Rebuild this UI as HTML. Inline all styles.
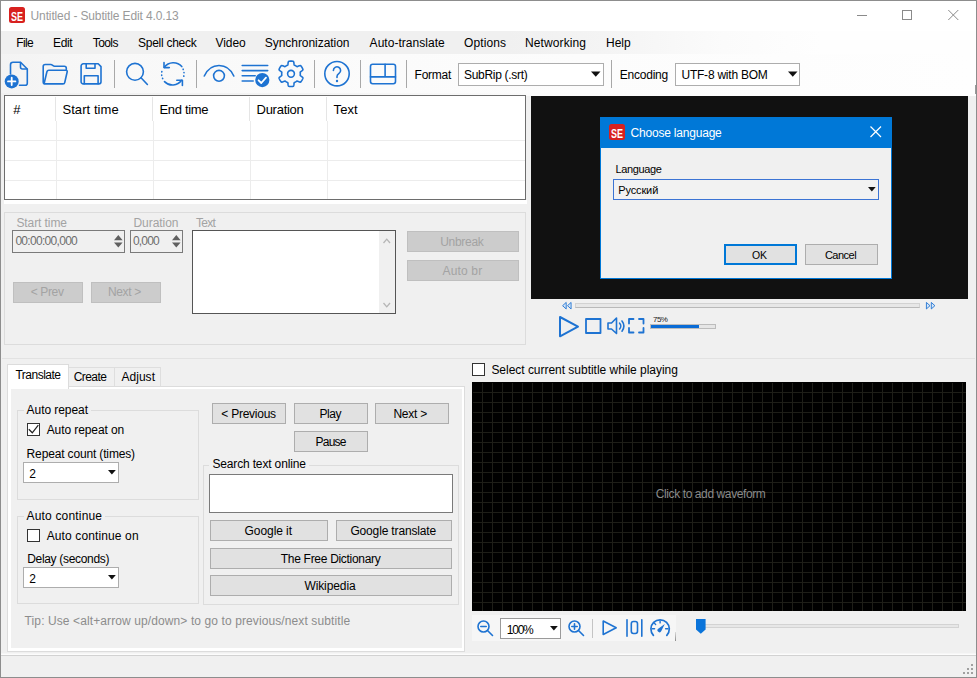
<!DOCTYPE html>
<html lang="en"><head><meta charset="utf-8"><title>Untitled - Subtitle Edit 4.0.13</title>
<style>
html,body{margin:0;padding:0;}
body{width:977px;height:678px;overflow:hidden;background:#f0f0f0;position:relative;font-family:"Liberation Sans",sans-serif;}
.r{position:absolute;box-sizing:border-box;display:block;}
.t{position:absolute;white-space:pre;line-height:normal;font-family:"Liberation Sans",sans-serif;}
svg{overflow:visible;}
</style></head><body>
<div class="r" style="left:0px;top:0px;width:977px;height:31px;background:#ffffff;"></div>
<div class="r" style="left:9px;top:7px;width:16px;height:16px;background:#d8211f;border-radius:2.5px;"></div>
<span class="t nm" style="left:11px;top:8.9px;font-size:13px;font-weight:bold;color:#fff;transform:scaleX(.69);transform-origin:0 0;">SE</span>
<span class="t" style="left:30.6px;top:9.15px;font-size:12px;letter-spacing:-0.136px;color:#9a9a9a;">Untitled - Subtitle Edit 4.0.13</span>
<svg class="r" style="left:857px;top:0px;" width="120" height="31" viewBox="0 0 120 31"><g fill="none" stroke="#8a8a8a" stroke-width="1"><path d="M0 15.5h10"/><rect x="45.500" y="10.500" width="9" height="9"/><path d="M91.300 10l10 10M101.300 10l-10 10"/></g></svg>
<div class="r" style="left:0px;top:31px;width:977px;height:23px;background:linear-gradient(to right,#f0f0f0 0%,#f0f0f0 52%,#f4f4f4 62%,#fbfbfb 74%,#fefefe 84%,#fefefe 100%);"></div>
<span class="t" style="left:16.3px;top:35.95px;font-size:12px;letter-spacing:-0.615px;color:#000;">File</span>
<span class="t" style="left:53.0px;top:35.95px;font-size:12px;letter-spacing:-0.329px;color:#000;">Edit</span>
<span class="t" style="left:92.7px;top:35.95px;font-size:12px;letter-spacing:-0.554px;color:#000;">Tools</span>
<span class="t" style="left:138.0px;top:35.95px;font-size:12px;letter-spacing:-0.268px;color:#000;">Spell check</span>
<span class="t" style="left:215.6px;top:35.95px;font-size:12px;letter-spacing:-0.096px;color:#000;">Video</span>
<span class="t" style="left:264.8px;top:35.95px;font-size:12px;letter-spacing:-0.049px;color:#000;">Synchronization</span>
<span class="t" style="left:369.6px;top:35.95px;font-size:12px;letter-spacing:0.037px;color:#000;">Auto-translate</span>
<span class="t" style="left:464.0px;top:35.95px;font-size:12px;letter-spacing:0.107px;color:#000;">Options</span>
<span class="t" style="left:525.0px;top:35.95px;font-size:12px;letter-spacing:0.108px;color:#000;">Networking</span>
<span class="t" style="left:606.0px;top:35.95px;font-size:12px;letter-spacing:-0.029px;color:#000;">Help</span>
<div class="r" style="left:0px;top:54px;width:977px;height:39px;background:linear-gradient(to right,#f3f3f3 0%,#f8f8f8 12%,#fbfbfb 40%,#fefefe 100%);"></div>
<div class="r" style="left:114px;top:60px;width:1px;height:28px;background:#a8a8a8;"></div>
<div class="r" style="left:196px;top:60px;width:1px;height:28px;background:#a8a8a8;"></div>
<div class="r" style="left:314px;top:60px;width:1px;height:28px;background:#a8a8a8;"></div>
<div class="r" style="left:360px;top:60px;width:1px;height:28px;background:#a8a8a8;"></div>
<div class="r" style="left:406px;top:60px;width:1px;height:28px;background:#a8a8a8;"></div>
<div class="r" style="left:611px;top:60px;width:1px;height:28px;background:#a8a8a8;"></div>
<span class="t" style="left:414.6px;top:67.75px;font-size:12px;letter-spacing:-0.243px;color:#000;">Format</span>
<div class="r" style="left:458px;top:63px;width:146px;height:23px;background:#fff;border:1px solid #adadad;"></div>
<span class="t" style="left:464.0px;top:67.75px;font-size:12px;letter-spacing:-0.305px;color:#000;">SubRip (.srt)</span>
<svg class="r" style="left:591px;top:71px;" width="10" height="6" viewBox="0 0 10 6"><path d="M0 0.500h9.500L4.750 5.700z" fill="#111"/></svg>
<span class="t" style="left:619.8px;top:67.75px;font-size:12px;letter-spacing:-0.235px;color:#000;">Encoding</span>
<div class="r" style="left:675px;top:63px;width:125px;height:23px;background:#fff;border:1px solid #adadad;"></div>
<span class="t" style="left:681.5px;top:67.75px;font-size:12px;letter-spacing:-0.234px;color:#000;">UTF-8 with BOM</span>
<svg class="r" style="left:788px;top:71px;" width="10" height="6" viewBox="0 0 10 6"><path d="M0 0.500h9.500L4.750 5.700z" fill="#111"/></svg>
<div class="r" style="left:0px;top:93px;width:977px;height:3px;background:linear-gradient(to right,#f0f0f0 0%,#f3f3f3 30%,#fbfbfb 55%,#fefefe 100%);"></div>
<div class="r" style="left:4px;top:95px;width:522px;height:105px;background:#fff;border:1px solid #6d6d6d;"></div>
<div class="r" style="left:4px;top:200px;width:523px;height:4px;background:#fff;"></div>
<div class="r" style="left:56px;top:121px;width:1px;height:78px;background:#ececec;"></div>
<div class="r" style="left:55px;top:97px;width:1px;height:24px;background:#e5e5e5;"></div>
<div class="r" style="left:153px;top:121px;width:1px;height:78px;background:#ececec;"></div>
<div class="r" style="left:152px;top:97px;width:1px;height:24px;background:#e5e5e5;"></div>
<div class="r" style="left:250px;top:121px;width:1px;height:78px;background:#ececec;"></div>
<div class="r" style="left:249px;top:97px;width:1px;height:24px;background:#e5e5e5;"></div>
<div class="r" style="left:327px;top:121px;width:1px;height:78px;background:#ececec;"></div>
<div class="r" style="left:326px;top:97px;width:1px;height:24px;background:#e5e5e5;"></div>
<div class="r" style="left:5px;top:140px;width:520px;height:1px;background:#ececec;"></div>
<div class="r" style="left:5px;top:160px;width:520px;height:1px;background:#ececec;"></div>
<div class="r" style="left:5px;top:180px;width:520px;height:1px;background:#ececec;"></div>
<span class="t" style="left:13.3px;top:101.83px;font-size:13px;letter-spacing:-0.034px;color:#000;">#</span>
<span class="t" style="left:62.4px;top:101.83px;font-size:13px;letter-spacing:0.075px;color:#000;">Start time</span>
<span class="t" style="left:159.5px;top:101.83px;font-size:13px;letter-spacing:-0.316px;color:#000;">End time</span>
<span class="t" style="left:256.5px;top:101.83px;font-size:13px;letter-spacing:-0.263px;color:#000;">Duration</span>
<span class="t" style="left:333.6px;top:101.83px;font-size:13px;letter-spacing:0.085px;color:#000;">Text</span>
<div class="r" style="left:4px;top:212px;width:522px;height:133px;border:1px solid #dcdcdc;"></div>
<span class="t" style="left:16.4px;top:215.55px;font-size:12px;letter-spacing:-0.084px;color:#a3a3a3;">Start time</span>
<span class="t" style="left:133.5px;top:215.55px;font-size:12px;letter-spacing:-0.051px;color:#a3a3a3;">Duration</span>
<span class="t" style="left:196.0px;top:215.55px;font-size:12px;letter-spacing:-0.739px;color:#a3a3a3;">Text</span>
<div class="r" style="left:12px;top:230px;width:113px;height:23px;background:#f0f0f0;border:1px solid #7a7a7a;"></div>
<span class="t" style="left:15.4px;top:233.95px;font-size:12px;letter-spacing:-0.698px;color:#6d6d6d;">00:00:00,000</span>
<div class="r" style="left:130px;top:230px;width:53px;height:23px;background:#f0f0f0;border:1px solid #7a7a7a;"></div>
<span class="t" style="left:133.0px;top:233.95px;font-size:12px;letter-spacing:-0.833px;color:#6d6d6d;">0,000</span>
<svg class="r" style="left:113.6px;top:234.8px;" width="9" height="13" viewBox="0 0 9 13"><path d="M0 5.200L4.300 0l4.300 5.200zM0 7.600h8.600L4.300 12.500z" fill="#606060"/></svg>
<svg class="r" style="left:171.5px;top:234.8px;" width="9" height="13" viewBox="0 0 9 13"><path d="M0 5.200L4.300 0l4.300 5.200zM0 7.600h8.600L4.300 12.500z" fill="#606060"/></svg>
<div class="r" style="left:13px;top:282px;width:70px;height:21px;background:#cccccc;border:1px solid #bfbfbf;"></div>
<span class="t" style="left:30.7px;top:284.95px;font-size:12px;letter-spacing:-0.363px;color:#a3a3a3;">&lt; Prev</span>
<div class="r" style="left:91px;top:282px;width:70px;height:21px;background:#cccccc;border:1px solid #bfbfbf;"></div>
<span class="t" style="left:107.9px;top:284.95px;font-size:12px;letter-spacing:-0.343px;color:#a3a3a3;">Next &gt;</span>
<div class="r" style="left:192px;top:230px;width:204px;height:84px;background:#fff;border:1px solid #555;"></div>
<div class="r" style="left:379px;top:231px;width:16px;height:82px;background:#f0f0f0;"></div>
<svg class="r" style="left:383px;top:238px;" width="8" height="6" viewBox="0 0 8 6"><path d="M0.500 5L3.750 1.200 7 5" fill="none" stroke="#b5b5b5" stroke-width="1.300"/></svg>
<svg class="r" style="left:383px;top:301.5px;" width="8" height="6" viewBox="0 0 8 6"><path d="M0.500 1L3.750 4.800 7 1" fill="none" stroke="#b5b5b5" stroke-width="1.300"/></svg>
<div class="r" style="left:407px;top:231px;width:112px;height:21px;background:#cccccc;border:1px solid #bfbfbf;"></div>
<span class="t" style="left:440.2px;top:235.05px;font-size:12px;letter-spacing:-0.293px;color:#a3a3a3;">Unbreak</span>
<div class="r" style="left:407px;top:260px;width:112px;height:21px;background:#cccccc;border:1px solid #bfbfbf;"></div>
<span class="t" style="left:442.5px;top:264.05px;font-size:12px;letter-spacing:0.166px;color:#a3a3a3;">Auto br</span>
<div class="r" style="left:531px;top:96px;width:437px;height:203px;background:#111111;"></div>
<div class="r" style="left:600px;top:117px;width:292px;height:162px;background:#f0f0f0;border:1px solid #0078d7;"></div>
<div class="r" style="left:600px;top:117px;width:292px;height:31px;background:#0078d7;"></div>
<div class="r" style="left:609px;top:124px;width:16px;height:16px;background:#d8211f;border-radius:2.5px;"></div>
<span class="t nm" style="left:611px;top:125.6px;font-size:13px;font-weight:bold;color:#fff;transform:scaleX(.69);transform-origin:0 0;">SE</span>
<span class="t" style="left:630.6px;top:125.95px;font-size:12px;letter-spacing:-0.206px;color:#fff;">Choose language</span>
<svg class="r" style="left:870px;top:126px;" width="12" height="12" viewBox="0 0 12 12"><path d="M0.500 0.500l10.500 10.500M11 0.500L0.500 11" stroke="#fff" stroke-width="1.200" fill="none"/></svg>
<span class="t" style="left:615.4px;top:162.87px;font-size:11px;letter-spacing:-0.336px;color:#000;">Language</span>
<div class="r" style="left:613px;top:179px;width:266px;height:21px;background:#f2f2f2;border:1px solid #3c74d4;"></div>
<span class="t" style="left:618.2px;top:183.97px;font-size:11px;letter-spacing:-0.121px;color:#000;">Русский</span>
<svg class="r" style="left:867.7px;top:187.4px;" width="8" height="5" viewBox="0 0 8 5"><path d="M0 0h7.700L3.850 4.400z" fill="#111"/></svg>
<div class="r" style="left:724px;top:244px;width:73px;height:21px;background:#e1e1e1;border:2px solid #0078d7;"></div>
<span class="t" style="left:751.9px;top:249.33px;font-size:10.5px;letter-spacing:0.000px;color:#000;">OK</span>
<div class="r" style="left:805px;top:244px;width:73px;height:21px;background:#e1e1e1;border:1px solid #adadad;"></div>
<span class="t" style="left:824.9px;top:248.87px;font-size:11px;letter-spacing:-0.510px;color:#000;">Cancel</span>
<svg class="r" style="left:562px;top:302px;" width="10" height="8" viewBox="0 0 10 8"><g fill="none" stroke="#1e73d2" stroke-linecap="round" stroke-linejoin="round" stroke-width="0.900"><path d="M3.900 0.700L0.600 3.700 3.900 6.700zM8.800 0.700L5.500 3.700 8.800 6.700z" fill="#d6e6f8"/></g></svg>
<svg class="r" style="left:926px;top:302px;" width="10" height="8" viewBox="0 0 10 8"><g fill="none" stroke="#1e73d2" stroke-linecap="round" stroke-linejoin="round" stroke-width="0.900"><path d="M0.700 0.700L4 3.700 0.700 6.700zM5.600 0.700L8.900 3.700 5.600 6.700z" fill="#d6e6f8"/></g></svg>
<div class="r" style="left:575px;top:303px;width:345px;height:5px;background:#e7e7e7;border:1px solid #d2d2d2;border-bottom-color:#b9b9b9;"></div>
<svg class="r" style="left:558px;top:315px;" width="22" height="23" viewBox="0 0 22 23"><g fill="none" stroke="#1e73d2" stroke-linecap="round" stroke-linejoin="round" stroke-width="2"><path d="M2 2v19.300L20 11.600z"/></g></svg>
<svg class="r" style="left:585px;top:318px;" width="17" height="16" viewBox="0 0 17 16"><g fill="none" stroke="#1e73d2" stroke-linecap="round" stroke-linejoin="round" stroke-width="1.800"><rect x="1" y="1" width="14.500" height="14"/></g></svg>
<svg class="r" style="left:607px;top:317px;" width="18" height="18" viewBox="0 0 18 18"><g fill="none" stroke="#1e73d2" stroke-linecap="round" stroke-linejoin="round" stroke-width="1.600"><path d="M1 6v6h3.500l5 4.500v-15.500l-5 5z"/><path d="M12.600 6.200a4.200 4.200 0 0 1 0 5.800M15 4a8.500 8.500 0 0 1 0 10.200"/></g></svg>
<svg class="r" style="left:628px;top:318px;" width="17" height="16" viewBox="0 0 17 16"><g fill="none" stroke="#1e73d2" stroke-linecap="round" stroke-linejoin="round" stroke-width="1.800"><path d="M1 5.500V1h4.500M11 1h4.500v4.500M15.500 10v4.500H11M5.500 14.500H1V10"/></g></svg>
<span class="t" style="left:653.1px;top:314.53px;font-size:8px;letter-spacing:-0.608px;color:#222;">75%</span>
<div class="r" style="left:650px;top:324px;width:66px;height:5px;background:#e6e6e6;border:1px solid #bcbcbc;"></div>
<div class="r" style="left:651px;top:325px;width:48px;height:3px;background:#0a6cd6;"></div>
<div class="r" style="left:2px;top:358px;width:973px;height:1px;background:#e2e2e2;"></div>
<div class="r" style="left:7px;top:386px;width:458px;height:266px;border:1px solid #dcdcdc;"></div>
<div class="r" style="left:8px;top:387px;width:456px;height:264px;background:#f0f0f0;border:2px solid #fff;border-width:2px 2px 3px 3px;"></div>
<div class="r" style="left:7px;top:364px;width:62px;height:25px;background:#fff;border:1px solid #dcdcdc;border-bottom:none;"></div>
<div class="r" style="left:69px;top:367px;width:46px;height:19px;background:#f0f0f0;border:1px solid #dedede;border-bottom:none;border-left:none;"></div>
<div class="r" style="left:115px;top:367px;width:46px;height:19px;background:#f0f0f0;border:1px solid #dedede;border-bottom:none;border-left:none;"></div>
<span class="t" style="left:15.5px;top:367.75px;font-size:12px;letter-spacing:-0.510px;color:#000;">Translate</span>
<span class="t" style="left:73.7px;top:369.95px;font-size:12px;letter-spacing:-0.566px;color:#000;">Create</span>
<span class="t" style="left:121.4px;top:369.95px;font-size:12px;letter-spacing:0.048px;color:#000;">Adjust</span>
<div class="r" style="left:17px;top:410px;width:182px;height:90px;border:1px solid #dcdcdc;"></div>
<div class="r" style="left:24px;top:403px;width:67px;height:14px;background:#f0f0f0;"></div>
<span class="t" style="left:26.6px;top:402.75px;font-size:12px;letter-spacing:-0.065px;color:#000;">Auto repeat</span>
<div class="r" style="left:27px;top:423px;width:13px;height:13px;background:#fff;border:1px solid #333;"></div>
<svg class="r" style="left:27px;top:423px;" width="13" height="13" viewBox="0 0 13 13"><path d="M1.800 6.200L5.300 9.800 11.300 2.200" fill="none" stroke="#222" stroke-width="1.250"/></svg>
<span class="t" style="left:46.7px;top:422.75px;font-size:12px;letter-spacing:-0.087px;color:#000;">Auto repeat on</span>
<span class="t" style="left:26.6px;top:447.05px;font-size:12px;letter-spacing:-0.152px;color:#000;">Repeat count (times)</span>
<div class="r" style="left:23px;top:462px;width:96px;height:21px;background:#fff;border:1px solid #adadad;"></div>
<span class="t" style="left:29.3px;top:466.55px;font-size:12px;letter-spacing:0.000px;color:#000;">2</span>
<svg class="r" style="left:107.9px;top:470px;" width="8" height="5" viewBox="0 0 8 5"><path d="M0 0h7.800L3.900 4.600z" fill="#111"/></svg>
<div class="r" style="left:17px;top:516px;width:182px;height:88px;border:1px solid #dcdcdc;"></div>
<div class="r" style="left:24px;top:509px;width:81px;height:14px;background:#f0f0f0;"></div>
<span class="t" style="left:26.6px;top:508.55px;font-size:12px;letter-spacing:0.167px;color:#000;">Auto continue</span>
<div class="r" style="left:27px;top:529px;width:13px;height:13px;background:#fff;border:1px solid #333;"></div>
<span class="t" style="left:46.7px;top:528.65px;font-size:12px;letter-spacing:0.121px;color:#000;">Auto continue on</span>
<span class="t" style="left:27.2px;top:552.05px;font-size:12px;letter-spacing:-0.315px;color:#000;">Delay (seconds)</span>
<div class="r" style="left:23px;top:567px;width:96px;height:21px;background:#fff;border:1px solid #adadad;"></div>
<span class="t" style="left:29.3px;top:571.55px;font-size:12px;letter-spacing:0.000px;color:#000;">2</span>
<svg class="r" style="left:107.9px;top:575px;" width="8" height="5" viewBox="0 0 8 5"><path d="M0 0h7.800L3.900 4.600z" fill="#111"/></svg>
<span class="t" style="left:24.6px;top:614.35px;font-size:12px;letter-spacing:0.103px;color:#8c8c8c;">Tip: Use &lt;alt+arrow up/down&gt; to go to previous/next subtitle</span>
<div class="r" style="left:212px;top:403px;width:74px;height:21px;background:#e1e1e1;border:1px solid #adadad;"></div>
<span class="t" style="left:221.3px;top:406.55px;font-size:12px;letter-spacing:-0.248px;color:#000;">&lt; Previous</span>
<div class="r" style="left:294px;top:403px;width:74px;height:21px;background:#e1e1e1;border:1px solid #adadad;"></div>
<span class="t" style="left:319.5px;top:406.55px;font-size:12px;letter-spacing:-0.448px;color:#000;">Play</span>
<div class="r" style="left:375px;top:403px;width:74px;height:21px;background:#e1e1e1;border:1px solid #adadad;"></div>
<span class="t" style="left:393.4px;top:406.55px;font-size:12px;letter-spacing:-0.223px;color:#000;">Next &gt;</span>
<div class="r" style="left:294px;top:431px;width:74px;height:21px;background:#e1e1e1;border:1px solid #adadad;"></div>
<span class="t" style="left:315.5px;top:434.55px;font-size:12px;letter-spacing:-0.758px;color:#000;">Pause</span>
<div class="r" style="left:203px;top:465px;width:256px;height:140px;border:1px solid #dcdcdc;"></div>
<div class="r" style="left:209px;top:458px;width:100px;height:14px;background:#f0f0f0;"></div>
<span class="t" style="left:212.4px;top:457.25px;font-size:12px;letter-spacing:-0.151px;color:#000;">Search text online</span>
<div class="r" style="left:209px;top:474px;width:244px;height:39px;background:#fff;border:1px solid #7a7a7a;"></div>
<div class="r" style="left:210px;top:520px;width:118px;height:21px;background:#e1e1e1;border:1px solid #adadad;"></div>
<span class="t" style="left:244.6px;top:523.55px;font-size:12px;letter-spacing:-0.079px;color:#000;">Google it</span>
<div class="r" style="left:336px;top:520px;width:116px;height:21px;background:#e1e1e1;border:1px solid #adadad;"></div>
<span class="t" style="left:350.4px;top:523.55px;font-size:12px;letter-spacing:-0.151px;color:#000;">Google translate</span>
<div class="r" style="left:210px;top:548px;width:242px;height:21px;background:#e1e1e1;border:1px solid #adadad;"></div>
<span class="t" style="left:280.8px;top:551.55px;font-size:12px;letter-spacing:-0.299px;color:#000;">The Free Dictionary</span>
<div class="r" style="left:210px;top:575px;width:242px;height:21px;background:#e1e1e1;border:1px solid #adadad;"></div>
<span class="t" style="left:304.4px;top:579.05px;font-size:12px;letter-spacing:-0.091px;color:#000;">Wikipedia</span>
<div class="r" style="left:472px;top:363px;width:13px;height:13px;background:#fff;border:1px solid #333;"></div>
<span class="t" style="left:491.4px;top:362.55px;font-size:12px;letter-spacing:-0.026px;color:#000;">Select current subtitle while playing</span>
<div class="r" style="left:472px;top:382px;width:494px;height:229px;background-color:#000;background-image:linear-gradient(to right,#1e1e18 1px,transparent 1px),linear-gradient(to bottom,#1e1e18 1px,transparent 1px);background-size:10px 10px;background-position:0 0;"></div>
<div class="r" style="left:472px;top:382px;width:494px;height:1px;background:#000;"></div>
<div class="r" style="left:472px;top:382px;width:1px;height:229px;background:#000;"></div>
<span class="t" style="left:655.8px;top:486.95px;font-size:12px;letter-spacing:-0.402px;color:#8a8a8a;">Click to add waveform</span>
<div class="r" style="left:472px;top:615px;width:204px;height:26px;background:#f6f6f6;"></div>
<svg class="r" style="left:477px;top:620px;" width="16" height="16" viewBox="0 0 16 16"><g fill="none" stroke="#1e73d2" stroke-linecap="round" stroke-linejoin="round" stroke-width="1.600"><circle cx="6.500" cy="6.500" r="5.500"/><path d="M10.500 10.500l5 5M3.800 6.500h5.400"/></g></svg>
<div class="r" style="left:500px;top:618px;width:61px;height:21px;background:#fff;border:1px solid #9a9a9a;"></div>
<span class="t" style="left:506.8px;top:622.55px;font-size:12px;letter-spacing:-1.234px;color:#000;">100%</span>
<svg class="r" style="left:549.8px;top:626.3px;" width="8" height="5" viewBox="0 0 8 5"><path d="M0 0h7.800L3.900 4.600z" fill="#111"/></svg>
<svg class="r" style="left:568px;top:620px;" width="16" height="16" viewBox="0 0 16 16"><g fill="none" stroke="#1e73d2" stroke-linecap="round" stroke-linejoin="round" stroke-width="1.600"><circle cx="6.500" cy="6.500" r="5.500"/><path d="M10.500 10.500l5 5M3.800 6.500h5.400M6.500 3.800v5.400"/></g></svg>
<div class="r" style="left:592px;top:619px;width:1px;height:19px;background:#c4c4c4;"></div>
<svg class="r" style="left:602px;top:620px;" width="16" height="16" viewBox="0 0 16 16"><g fill="none" stroke="#1e73d2" stroke-linecap="round" stroke-linejoin="round" stroke-width="1.600"><path d="M1.200 1v13.500L14.200 7.750z"/></g></svg>
<svg class="r" style="left:626px;top:618px;" width="17" height="19" viewBox="0 0 17 19"><g fill="none" stroke="#1e73d2" stroke-linecap="round" stroke-linejoin="round" stroke-width="1.600"><path d="M1 1.800v16.500M15.800 1.800v16.500"/><rect x="5.300" y="3.500" width="6.200" height="12" rx="2.200"/></g></svg>
<div class="r" style="left:675px;top:632px;width:1px;height:9px;background:linear-gradient(to bottom,#dadada,#8c8c8c);"></div>
<div class="r" style="left:704px;top:624px;width:255px;height:4px;background:#e7e7e7;border:1px solid #d3d3d3;"></div>
<svg class="r" style="left:695.5px;top:619px;" width="10" height="15" viewBox="0 0 10 15"><path d="M0 0h9.600v10.500L4.800 14.800 0 10.500z" fill="#0a74da"/></svg>
<div class="r" style="left:1px;top:653px;width:975px;height:1px;background:#f6f6f6;"></div>
<div class="r" style="left:1px;top:654px;width:975px;height:1px;background:#fcfcfc;"></div>
<div class="r" style="left:1px;top:655px;width:975px;height:1px;background:#d2d2d2;"></div>
<svg class="r" style="left:962px;top:663px;" width="13" height="13" viewBox="0 0 13 13"><g fill="#a0a0a0"><rect x="9" y="1" width="2" height="2"/><rect x="5" y="5" width="2" height="2"/><rect x="9" y="5" width="2" height="2"/><rect x="1" y="9" width="2" height="2"/><rect x="5" y="9" width="2" height="2"/><rect x="9" y="9" width="2" height="2"/></g></svg>
<svg class="r" style="left:0;top:0" width="977" height="678" viewBox="0 0 977 678"><g fill="none" stroke="#1e73d2" stroke-width="1.6" stroke-linecap="round" stroke-linejoin="round"><path d="M10.500 74V64.800a2.500 2.500 0 0 1 2.500-2.500H20.500L27.300 69V83.300a2 2 0 0 1-2 2H19.500"/><path d="M20.500 62.500v4.500a2 2 0 0 0 2 2h4.600"/></g><circle cx="11.700" cy="81.400" r="7" fill="#1e73d2"/><path d="M8 81.400h7.400M11.700 77.700v7.400" stroke="#fff" stroke-width="1.800" stroke-linecap="round"/><g fill="none" stroke="#1e73d2" stroke-width="1.6" stroke-linecap="round" stroke-linejoin="round"><path d="M44.300 82.800L46.900 71.800a2 2 0 0 1 1.900-1.500H66a1.200 1.200 0 0 1 1.200 1.500L64.800 82.300a2 2 0 0 1-1.900 1.600H45.200a2 2 0 0 1-2-2V66.500a2 2 0 0 1 2-2h5.600c1.600 0 2.200 1.800 3.800 1.800h9.700a2 2 0 0 1 2 2v2"/></g><g fill="none" stroke="#1e73d2" stroke-width="1.6" stroke-linecap="round" stroke-linejoin="round"><path d="M81.100 66a2.200 2.200 0 0 1 2.200-2.200H98.200l2.800 2.800V81.700a2.200 2.200 0 0 1-2.200 2.200H83.300a2.200 2.200 0 0 1-2.200-2.200z"/><path d="M86.200 64V68.300H95V64"/><path d="M84.300 83.800V75.700H98.100V83.800"/></g><g fill="none" stroke="#1e73d2" stroke-width="1.6" stroke-linecap="round" stroke-linejoin="round" stroke-width="1.800"><circle cx="135" cy="71.800" r="8.400"/><path d="M141 77.800l6.400 6.700"/></g><g fill="none" stroke="#1e73d2" stroke-width="1.6" stroke-linecap="round" stroke-linejoin="round" stroke-width="1.900"><path d="M164.300 67.300A11.200 11.200 0 0 1 181.800 66.600"/><path d="M164 62.600v5h5.300"/><path d="M181.600 80.300A11.200 11.200 0 0 1 164.500 81.600"/><path d="M182.400 85.400v-5.200h-5.600"/><path d="M183.100 69.200A11.200 11.200 0 0 1 183.300 77.800" stroke-dasharray="0.300 3.100"/><path d="M162.700 78.600A11.200 11.200 0 0 1 162.200 70.200" stroke-dasharray="0.300 3.100"/></g><g fill="none" stroke="#1e73d2" stroke-width="1.6" stroke-linecap="round" stroke-linejoin="round" stroke-width="2"><path d="M204.300 76C207.500 69 213 65.500 219 65.500S230.700 69 233.800 76"/><circle cx="219" cy="75.800" r="5.400"/></g><g fill="none" stroke="#1e73d2" stroke-width="1.6" stroke-linecap="round" stroke-linejoin="round" stroke-width="1.500" stroke-linecap="butt"><path d="M242.200 65.500h25.500M242.200 70.600h25.500M242.200 75.700h13M242.200 81h11"/></g><circle cx="262.300" cy="80.100" r="7.100" fill="#1e73d2"/><path d="M258.600 80.300l2.700 2.700 4.700-5.300" fill="none" stroke="#fff" stroke-width="1.800" stroke-linecap="round" stroke-linejoin="round"/><g fill="none" stroke="#1e73d2" stroke-width="1.6" stroke-linecap="round" stroke-linejoin="round" stroke-width="1.700"><path d="M291.00 61.10 L291.44 61.11 L291.89 61.13 L292.33 61.17 L292.77 61.22 L293.21 61.29 L293.58 61.64 L293.83 62.44 L293.97 63.46 L294.06 64.40 L294.20 65.00 L294.48 65.18 L294.78 65.30 L295.08 65.44 L295.37 65.59 L295.65 65.75 L295.93 65.91 L296.20 66.09 L296.47 66.28 L296.73 66.47 L297.02 66.62 L297.62 66.45 L298.47 66.06 L299.42 65.67 L300.24 65.48 L300.73 65.64 L301.01 65.98 L301.27 66.34 L301.53 66.70 L301.77 67.07 L302.00 67.45 L302.21 67.84 L302.41 68.23 L302.60 68.63 L302.78 69.04 L302.93 69.46 L302.82 69.96 L302.25 70.57 L301.44 71.20 L300.67 71.74 L300.23 72.17 L300.21 72.51 L300.25 72.83 L300.28 73.15 L300.29 73.48 L300.30 73.80 L300.29 74.12 L300.28 74.45 L300.25 74.77 L300.21 75.09 L300.23 75.43 L300.67 75.86 L301.44 76.40 L302.25 77.03 L302.82 77.64 L302.93 78.14 L302.78 78.56 L302.60 78.97 L302.41 79.37 L302.21 79.76 L302.00 80.15 L301.77 80.53 L301.53 80.90 L301.27 81.26 L301.01 81.62 L300.73 81.96 L300.24 82.12 L299.42 81.93 L298.47 81.54 L297.62 81.15 L297.02 80.98 L296.73 81.13 L296.47 81.32 L296.20 81.51 L295.93 81.69 L295.65 81.85 L295.37 82.01 L295.08 82.16 L294.78 82.30 L294.48 82.42 L294.20 82.60 L294.06 83.20 L293.97 84.14 L293.83 85.16 L293.58 85.96 L293.21 86.31 L292.77 86.38 L292.33 86.43 L291.89 86.47 L291.44 86.49 L291.00 86.50 L290.56 86.49 L290.11 86.47 L289.67 86.43 L289.23 86.38 L288.79 86.31 L288.42 85.96 L288.17 85.16 L288.03 84.14 L287.94 83.20 L287.80 82.60 L287.52 82.42 L287.22 82.30 L286.92 82.16 L286.63 82.01 L286.35 81.85 L286.07 81.69 L285.80 81.51 L285.53 81.32 L285.27 81.13 L284.98 80.98 L284.38 81.15 L283.53 81.54 L282.58 81.93 L281.76 82.12 L281.27 81.96 L280.99 81.62 L280.73 81.26 L280.47 80.90 L280.23 80.53 L280.00 80.15 L279.79 79.76 L279.59 79.37 L279.40 78.97 L279.22 78.56 L279.07 78.14 L279.18 77.64 L279.75 77.03 L280.56 76.40 L281.33 75.86 L281.77 75.43 L281.79 75.09 L281.75 74.77 L281.72 74.45 L281.71 74.12 L281.70 73.80 L281.71 73.48 L281.72 73.15 L281.75 72.83 L281.79 72.51 L281.77 72.17 L281.33 71.74 L280.56 71.20 L279.75 70.57 L279.18 69.96 L279.07 69.46 L279.22 69.04 L279.40 68.63 L279.59 68.23 L279.79 67.84 L280.00 67.45 L280.23 67.07 L280.47 66.70 L280.73 66.34 L280.99 65.98 L281.27 65.64 L281.76 65.48 L282.58 65.67 L283.53 66.06 L284.38 66.45 L284.98 66.62 L285.27 66.47 L285.53 66.28 L285.80 66.09 L286.07 65.91 L286.35 65.75 L286.63 65.59 L286.92 65.44 L287.22 65.30 L287.52 65.18 L287.80 65.00 L287.94 64.40 L288.03 63.46 L288.17 62.44 L288.42 61.64 L288.79 61.29 L289.23 61.22 L289.67 61.17 L290.11 61.13 L290.56 61.11Z"/><circle cx="291" cy="73.800" r="3.400"/></g><g fill="none" stroke="#1e73d2" stroke-width="1.6" stroke-linecap="round" stroke-linejoin="round" stroke-width="1.700"><circle cx="337" cy="73.700" r="12.200"/><path d="M333.400 70.400a3.600 3.600 0 1 1 5.600 3c-1.300.9-2 1.600-2 3.200v.8"/></g><circle cx="337" cy="81" r="1.200" fill="#1e73d2"/><g fill="none" stroke="#1e73d2" stroke-width="1.6" stroke-linecap="round" stroke-linejoin="round" stroke-width="1.800"><rect x="370.500" y="64.300" width="25" height="19.400" rx="2.200"/><path d="M370.500 76.900h25M385.100 64.300v12.600"/></g><g fill="none" stroke="#1e73d2" stroke-linecap="round" stroke-linejoin="round" stroke-width="1.700"><path d="M653.400 635.300A9.200 9.200 0 1 1 666.800 635.300"/><path d="M660.100 621.300v1.600M652.200 628.800h2.400M665.600 628.800h2.400M654.500 623.300l1.200 1.300" stroke-width="1.400"/></g><path d="M664.800 623.900L661.300 631.100A2 2 0 1 1 658.200 628.700Z" fill="#1e73d2"/></svg>
<div class="r" style="left:975px;top:85px;width:1px;height:9px;background:#9a9a9a;"></div>
<div class="r" style="left:0px;top:0px;width:977px;height:678px;border:1px solid #8d8d8d;pointer-events:none;"></div>
</body></html>
